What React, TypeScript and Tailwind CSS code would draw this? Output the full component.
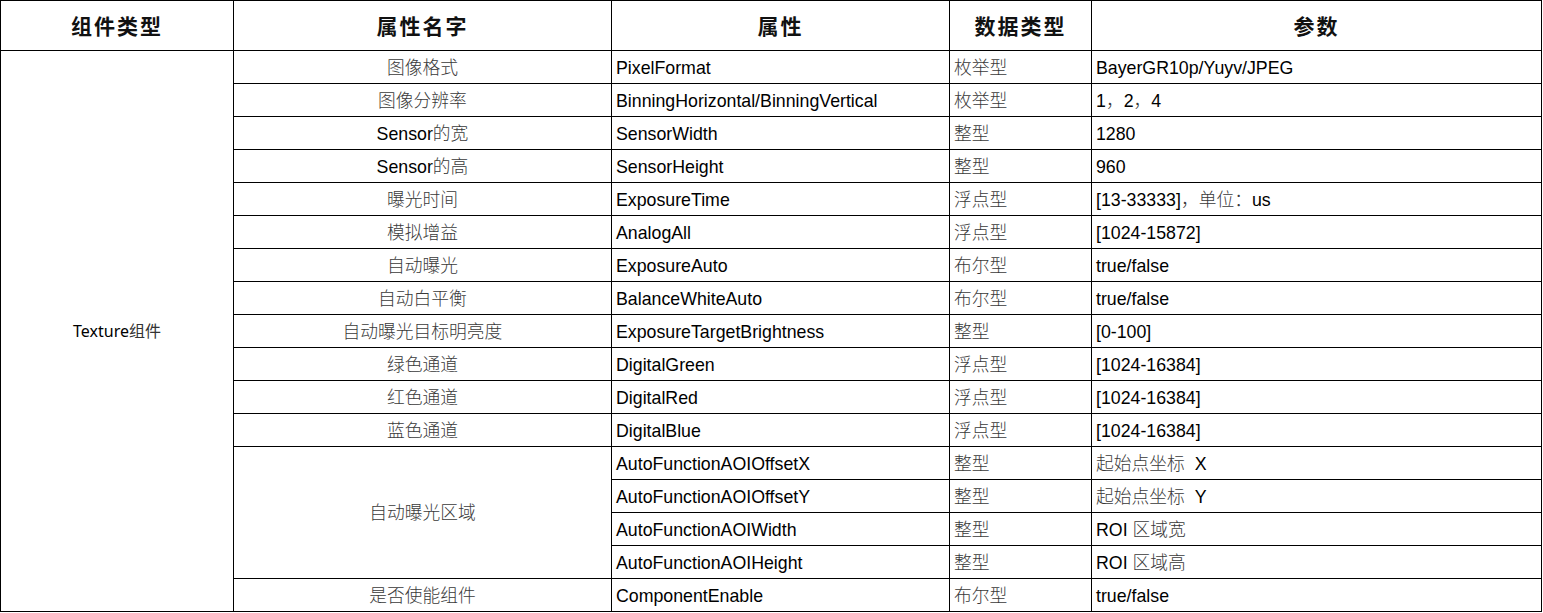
import React from "react";

const cjkRe = /([\u3000-\u303f\u4e00-\u9fff\uff00-\uffef]+)/;

function Mixed({ text }: { text: string }) {
  const parts = text.split(cjkRe).filter((p) => p.length > 0);
  return (
    <>
      {parts.map((p, i) =>
        cjkRe.test(p) ? (
          <span key={i} className="text-[#3a3a3a] font-light">
            {p}
          </span>
        ) : (
          <span key={i} className="text-black">
            {p}
          </span>
        )
      )}
    </>
  );
}

type Row = { name?: string; span?: number; attr: string; type: string; param: string };

const rows: Row[] = [
  { name: "图像格式", attr: "PixelFormat", type: "枚举型", param: "BayerGR10p/Yuyv/JPEG" },
  { name: "图像分辨率", attr: "BinningHorizontal/BinningVertical", type: "枚举型", param: "1，2，4" },
  { name: "Sensor的宽", attr: "SensorWidth", type: "整型", param: "1280" },
  { name: "Sensor的高", attr: "SensorHeight", type: "整型", param: "960" },
  { name: "曝光时间", attr: "ExposureTime", type: "浮点型", param: "[13-33333]，单位：us" },
  { name: "模拟增益", attr: "AnalogAll", type: "浮点型", param: "[1024-15872]" },
  { name: "自动曝光", attr: "ExposureAuto", type: "布尔型", param: "true/false" },
  { name: "自动白平衡", attr: "BalanceWhiteAuto", type: "布尔型", param: "true/false" },
  { name: "自动曝光目标明亮度", attr: "ExposureTargetBrightness", type: "整型", param: "[0-100]" },
  { name: "绿色通道", attr: "DigitalGreen", type: "浮点型", param: "[1024-16384]" },
  { name: "红色通道", attr: "DigitalRed", type: "浮点型", param: "[1024-16384]" },
  { name: "蓝色通道", attr: "DigitalBlue", type: "浮点型", param: "[1024-16384]" },
  { name: "自动曝光区域", span: 4, attr: "AutoFunctionAOIOffsetX", type: "整型", param: "起始点坐标  X" },
  { attr: "AutoFunctionAOIOffsetY", type: "整型", param: "起始点坐标  Y" },
  { attr: "AutoFunctionAOIWidth", type: "整型", param: "ROI 区域宽" },
  { attr: "AutoFunctionAOIHeight", type: "整型", param: "ROI 区域高" },
  { name: "是否使能组件", attr: "ComponentEnable", type: "布尔型", param: "true/false" },
];

export default function App() {
  const font = "font-['Liberation_Sans','Noto_Sans_CJK_SC',sans-serif]";
  return (
    <div className="w-[1543px] h-[613px] bg-white">
      <table
        className={`border-collapse table-fixed w-[1541px] ${font} text-[17.75px] leading-none text-black`}
      >
        <colgroup>
          <col className="w-[233px]" />
          <col className="w-[378px]" />
          <col className="w-[338px]" />
          <col className="w-[142px]" />
          <col className="w-[450px]" />
        </colgroup>
        <thead>
          <tr className="h-[50px]">
            {["组件类型", "属性名字", "属性", "数据类型", "参数"].map((h) => (
              <th
                key={h}
                className="border border-black p-0 text-center align-middle font-['Noto_Sans_CJK_SC',serif] font-bold text-[21px] tracking-[2px] text-[#111]"
              >
                {h}
              </th>
            ))}
          </tr>
        </thead>
        <tbody>
          {rows.map((r, i) => (
            <tr key={i} className="h-[33px]">
              {i === 0 && (
                <td
                  rowSpan={rows.length}
                  className="border border-black p-0 text-center align-middle font-['Noto_Sans','Noto_Sans_CJK_SC',sans-serif] text-[16px]"
                >
                  <span className="text-black">Texture</span>
                  <span className="text-[#333]">组件</span>
                </td>
              )}
              {r.name !== undefined && (
                <td rowSpan={r.span ?? 1} className="border border-black pt-[3px] pb-0 px-0 text-center align-middle">
                  <Mixed text={r.name} />
                </td>
              )}
              <td className="border border-black pt-[3px] pb-0 pl-[4px] pr-0 text-left align-middle">
                <Mixed text={r.attr} />
              </td>
              <td className="border border-black pt-[3px] pb-0 pl-[4px] pr-0 text-left align-middle">
                <Mixed text={r.type} />
              </td>
              <td className="border border-black pt-[3px] pb-0 pl-[4px] pr-0 text-left align-middle whitespace-pre">
                <Mixed text={r.param} />
              </td>
            </tr>
          ))}
        </tbody>
      </table>
    </div>
  );
}
